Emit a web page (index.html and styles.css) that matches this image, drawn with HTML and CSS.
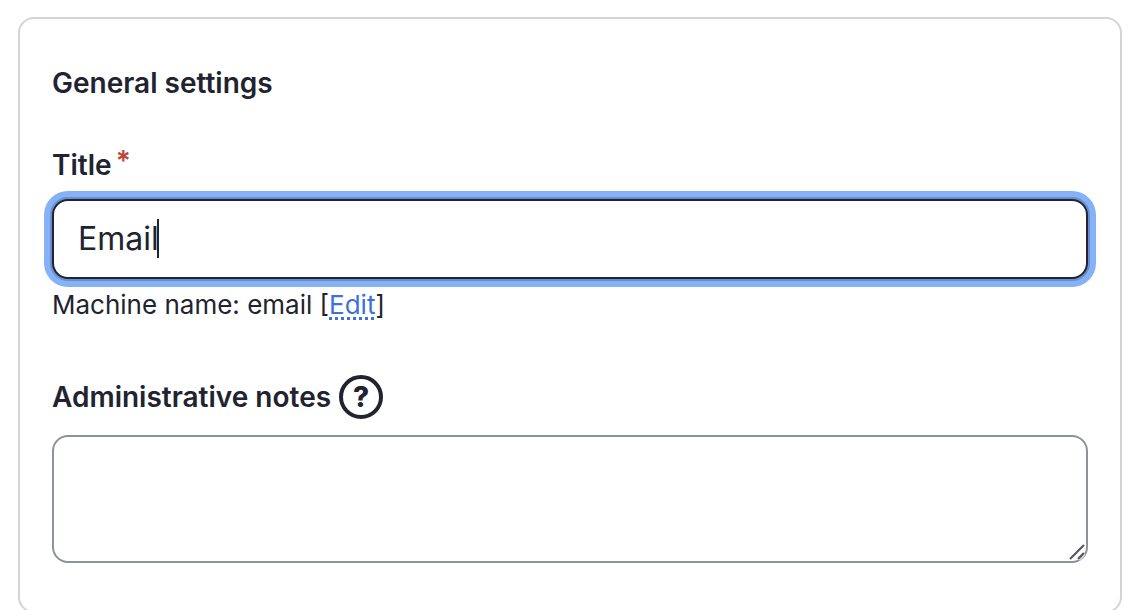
FILE: index.html
```html
<!DOCTYPE html>
<html lang="en">
<head>
    <meta charset="UTF-8">
    <meta name="viewport" content="width=device-width, initial-scale=1.0">
    <title>General settings</title>
    <link rel="stylesheet" href="styles.css">
</head>
<body>
    <form class="card">
        <h2 class="card-title">General settings</h2>

        <div class="form-item">
            <label class="label" for="title">Title<span class="required">*</span></label>
            <div class="control">
                <input class="text-input" type="text" id="title" value="Email" required>
                <span class="caret"></span>
            </div>
            <div class="description">Machine name: email [<a class="edit-link" href="#">Edit</a>]</div>
        </div>

        <div class="form-item">
            <div class="label-row">
                <label class="label" for="notes">Administrative notes</label>
                <button class="help" type="button" aria-label="Help">?</button>
            </div>
            <div class="control">
                <textarea class="textarea" id="notes"></textarea>
                <svg class="grip" viewBox="0 0 18 18" width="18" height="18">
                    <path d="M2 16L16 2M10 16L16 10" fill="none" stroke="#fff" stroke-width="4"/>
                    <path d="M11 16L16 11" fill="none" stroke="#d4d4d8" stroke-width="4"/>
                    <path d="M2 16L16 2M10 16L16 10" fill="none" stroke="#555" stroke-width="2"/>
                </svg>
            </div>
        </div>
    </form>
</body>
</html>
```
FILE: styles.css
```css
*{
    box-sizing: border-box;
}
body{
    margin: 0;
    padding: 17px 18px 0;
    background-color: #fff;
    color: #222330;
    font-family: Inter, "Liberation Sans", sans-serif;
    font-size: 28px;
    line-height: 36px;
}
.card{
    padding: 46px 32px 48px;
    border: 2px solid #d4d4d8;
    border-radius: 16px;
    overflow: hidden;
}
.card-title{
    margin: 0 0 46px;
    font-size: 28px;
    font-weight: 600;
}
.form-item + .form-item{
    margin-top: 52px;
}
.label{
    display: block;
    font-weight: 600;
}
.form-item > .label{
    margin-bottom: 16px;
}
.required{
    margin-left: 4px;
    color: #c0443c;
    line-height: 1;
    vertical-align: 4px;
}
.label-row{
    display: flex;
    align-items: center;
    gap: 8px;
    margin-bottom: 16px;
}
.control{
    position: relative;
}
.text-input{
    display: block;
    width: 100%;
    height: 80px;
    padding: 0 24px 2px;
    border: 2px solid #222330;
    border-radius: 16px;
    outline: none;
    background-color: #fff;
    box-shadow: 0 0 0 2px #688fcb, 0 0 0 8px #84b1f8;
    color: #222330;
    font-family: inherit;
    font-size: 32px;
}
.caret{
    position: absolute;
    top: 20px;
    left: 105px;
    width: 2px;
    height: 39px;
    background-color: #222330;
}
.description{
    margin-top: 8px;
    font-size: 26px;
    font-optical-sizing: none;
}
.edit-link{
    color: #3d70db;
    text-decoration: underline dotted 3px;
    text-decoration-skip-ink: none;
    text-underline-offset: 3px;
}
.help{
    width: 44px;
    height: 44px;
    padding: 0;
    border: 4px solid #222330;
    border-radius: 50%;
    background-color: transparent;
    color: #222330;
    font-family: inherit;
    font-size: 28px;
    font-weight: 800;
    line-height: 36px;
}
.textarea{
    display: block;
    width: 100%;
    height: 128px;
    padding: 16px 24px;
    border: 2px solid #8e929c;
    border-radius: 16px;
    outline: none;
    resize: none;
    background-color: #fff;
    font-family: inherit;
    font-size: 32px;
}
.grip{
    position: absolute;
    right: 2px;
    bottom: 2px;
}
```
